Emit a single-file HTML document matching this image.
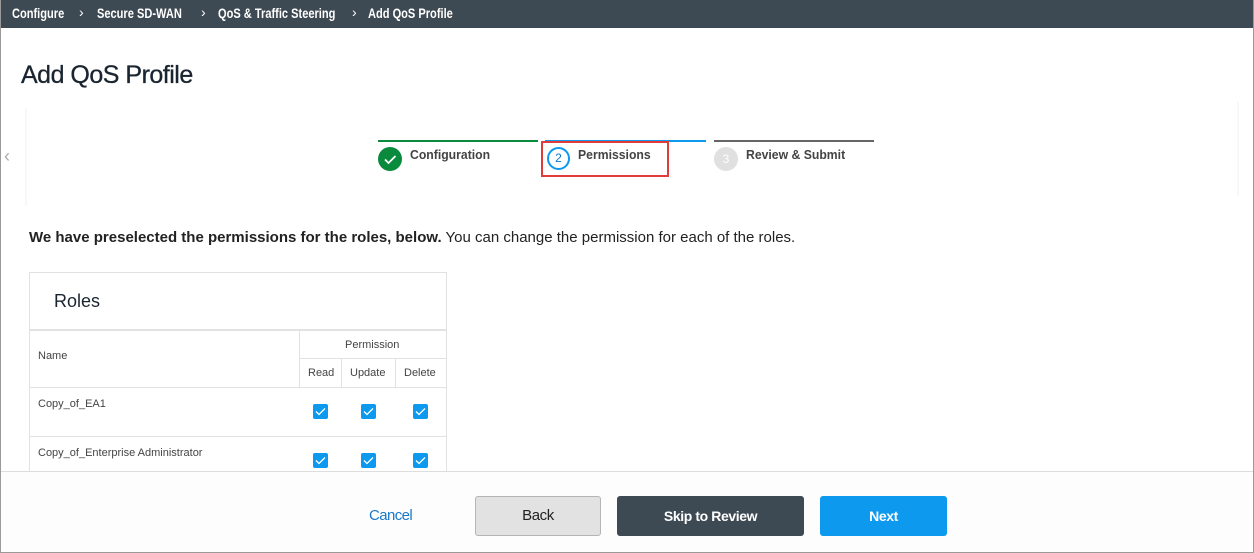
<!DOCTYPE html>
<html><head><style>
*{margin:0;padding:0;box-sizing:border-box}
body{width:1254px;height:553px;position:relative;overflow:hidden;background:#fff;font-family:"Liberation Sans",sans-serif;color:#333}
.a{position:absolute}
.hdr{left:0;top:0;width:1254px;height:28px;background:#3e4a53;color:#fff;font-size:14px;font-weight:bold}
.hdr span{position:absolute;top:5px;transform:scaleX(0.79);transform-origin:left;white-space:nowrap}
.hdr i{position:absolute;top:4px;font-style:normal;font-weight:normal;font-size:14px}
.frame{left:0;top:0;width:1254px;height:553px;border:1px solid #9a9a9a;border-top:none;pointer-events:none}
.cb{position:absolute;width:15px;height:15px;background:#0d99ee;border-radius:2px}
.cb svg{position:absolute;left:2px;top:3px}
.btn{position:absolute;top:496px;height:40px;border-radius:3px;font-size:14px;font-weight:bold;text-align:center;line-height:40px;letter-spacing:-0.4px}
.td{font-size:11px;color:#444}
.st{font-size:13px;font-weight:bold;color:#444;transform:scaleX(0.94);transform-origin:left;white-space:nowrap}
</style></head><body>
<div class="a hdr"><span style="left:12px">Configure</span><i style="left:79px">›</i><span style="left:97px">Secure SD-WAN</span><i style="left:201px">›</i><span style="left:218px">QoS &amp; Traffic Steering</span><i style="left:352px">›</i><span style="left:368px">Add QoS Profile</span></div>
<div class="a" style="left:21px;top:61px;font-size:25px;color:#1b2530;letter-spacing:-0.5px;-webkit-text-stroke:0.3px #1b2530">Add QoS Profile</div>
<div class="a" style="left:25px;top:108px;width:2px;height:98px;background:#f8f8f8"></div>
<div class="a" style="left:1237px;top:102px;width:2px;height:94px;background:#f8f8f8"></div>
<div class="a" style="left:4px;top:146px;color:#aaa;font-size:18px">‹</div>
<div class="a" style="left:378px;top:140px;width:160px;height:2px;background:#0a8a3c"></div>
<div class="a" style="left:545px;top:140px;width:161px;height:2px;background:#0d99ee"></div>
<div class="a" style="left:714px;top:140px;width:160px;height:2px;background:#666"></div>
<div class="a" style="left:378px;top:147px;width:24px;height:24px;border-radius:50%;background:#0a8a3c"><svg width="24" height="24"><path d="M7 12.5l3.5 3.5 7-7" fill="none" stroke="#fff" stroke-width="1.8"/></svg></div>
<div class="a st" style="left:410px;top:147px">Configuration</div>
<div class="a" style="left:541px;top:141px;width:128px;height:36px;border:2px solid #e33a3a"></div>
<div class="a" style="left:547px;top:147px;width:23px;height:23px;border-radius:50%;border:2px solid #0d99ee;color:#0d77cc;font-size:12px;text-align:center;line-height:19px">2</div>
<div class="a st" style="left:578px;top:147px">Permissions</div>
<div class="a" style="left:714px;top:147px;width:24px;height:24px;border-radius:50%;background:#e0e0e0;color:#fff;font-size:12px;text-align:center;line-height:24px">3</div>
<div class="a st" style="left:746px;top:147px">Review &amp; Submit</div>
<div class="a" style="left:29px;top:229px;font-size:15px;color:#222"><b>We have preselected the permissions for the roles, below.</b> You can change the permission for each of the roles.</div>
<div class="a" style="left:29px;top:272px;width:418px;height:200px;border:1px solid #e2e2e2;border-bottom:none"></div>
<div class="a" style="left:54px;top:291px;font-size:18px;color:#1b2530">Roles</div>
<div class="a" style="left:29px;top:329px;width:418px;height:2px;background:#e2e2e2"></div>
<div class="a" style="left:299px;top:331px;width:1px;height:56px;background:#e2e2e2"></div>
<div class="a" style="left:300px;top:358px;width:147px;height:1px;background:#e2e2e2"></div>
<div class="a" style="left:341px;top:359px;width:1px;height:28px;background:#e2e2e2"></div>
<div class="a" style="left:395px;top:359px;width:1px;height:28px;background:#e2e2e2"></div>
<div class="a" style="left:29px;top:387px;width:418px;height:1px;background:#e2e2e2"></div>
<div class="a" style="left:29px;top:436px;width:418px;height:1px;background:#e2e2e2"></div>
<div class="a td" style="left:38px;top:350px">Name</div>
<div class="a td" style="left:345px;top:339px">Permission</div>
<div class="a td" style="left:308px;top:367px">Read</div>
<div class="a td" style="left:350px;top:367px">Update</div>
<div class="a td" style="left:404px;top:367px">Delete</div>
<div class="a td" style="left:38px;top:398px">Copy_of_EA1</div>
<div class="a td" style="left:38px;top:447px">Copy_of_Enterprise Administrator</div>
<div class="cb" style="left:313px;top:404px"><svg width="11" height="9"><path d="M1 4.5l3 3 6-6" fill="none" stroke="#fff" stroke-width="1.3"/></svg></div>
<div class="cb" style="left:361px;top:404px"><svg width="11" height="9"><path d="M1 4.5l3 3 6-6" fill="none" stroke="#fff" stroke-width="1.3"/></svg></div>
<div class="cb" style="left:413px;top:404px"><svg width="11" height="9"><path d="M1 4.5l3 3 6-6" fill="none" stroke="#fff" stroke-width="1.3"/></svg></div>
<div class="cb" style="left:313px;top:453px"><svg width="11" height="9"><path d="M1 4.5l3 3 6-6" fill="none" stroke="#fff" stroke-width="1.3"/></svg></div>
<div class="cb" style="left:361px;top:453px"><svg width="11" height="9"><path d="M1 4.5l3 3 6-6" fill="none" stroke="#fff" stroke-width="1.3"/></svg></div>
<div class="cb" style="left:413px;top:453px"><svg width="11" height="9"><path d="M1 4.5l3 3 6-6" fill="none" stroke="#fff" stroke-width="1.3"/></svg></div>
<div class="a" style="left:0;top:471px;width:1254px;height:82px;background:#fdfdfd;border-top:1px solid #ddd"></div>
<div class="a" style="left:369px;top:507px;font-size:15px;color:#1a78c9;letter-spacing:-0.6px">Cancel</div>
<div class="btn" style="left:475px;width:126px;background:#e2e2e2;border:1px solid #b5b5b5;color:#222;font-weight:normal;line-height:38px;font-size:15px">Back</div>
<div class="btn" style="left:617px;width:187px;background:#3e4a53;color:#fff">Skip to Review</div>
<div class="btn" style="left:820px;width:127px;background:#0d99ee;color:#fff">Next</div>
<div class="a frame"></div>
</body></html>
